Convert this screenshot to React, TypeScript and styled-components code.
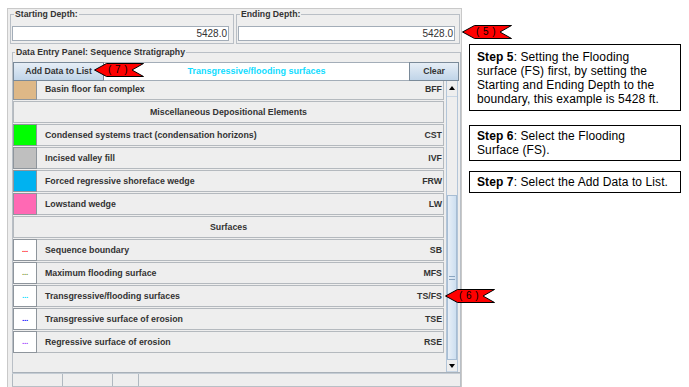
import styled, { createGlobalStyle } from "styled-components";

const GlobalStyle = createGlobalStyle`
  html, body {
    margin: 0;
    padding: 0;
    background: #ffffff;
    overflow: hidden;
  }
  body {
    font-family: "Liberation Sans", Arial, sans-serif;
  }
`;

const Page = styled.div`
  position: relative;
  display: flex;
  align-items: flex-start;
  width: 689px;
  height: 387px;
  overflow: hidden;
`;

const Frame = styled.div`
  box-sizing: border-box;
  width: 455px;
  height: 379px;
  margin: 8px 0 0 7px;
  background: #eeeeee;
  border: 1px solid #c9c9c9;
  border-bottom: none;
  overflow: hidden;
  display: flex;
  flex-direction: column;
`;

const DepthRow = styled.div`
  display: grid;
  grid-template-columns: 1fr 1fr;
  gap: 2px;
  padding: 0 1px 0 2px;
`;

const Group = styled.fieldset`
  margin: 0;
  padding: 7px 4px 2px 1px;
  border: 1px solid #b9bfc6;
  min-width: 0;
`;

const Legend = styled.legend`
  margin-left: 2px;
  padding: 0 1px;
  font: bold 8.7px/10px "Liberation Sans", Arial, sans-serif;
  color: #333333;
`;

const DepthField = styled.div`
  box-sizing: border-box;
  height: 15px;
  padding-right: 1px;
  background: #ffffff;
  border: 1px solid #a3adb8;
  font: 10px/13px "Liberation Sans", Arial, sans-serif;
  color: #333333;
  text-align: right;
`;

const DataPanel = styled.fieldset`
  flex: 1;
  min-height: 0;
  display: flex;
  flex-direction: column;
  margin: 3px 0 0 4px;
  padding: 5px 0 0 0;
  border: 1px solid #b9bfc6;
  min-width: 0;
`;

const ButtonRow = styled.div`
  display: flex;
  height: 19px;
  margin-right: 1px;
`;

const ActionButton = styled.div<{ $w: number }>`
  box-sizing: border-box;
  width: ${(p) => p.$w}px;
  display: flex;
  align-items: center;
  justify-content: center;
  border: 1px solid #7a8a99;
  background: linear-gradient(#e6eef6, #c0d4e8);
  font: bold 8.7px "Liberation Sans", Arial, sans-serif;
  color: #333333;
`;

const SelectionField = styled.div`
  flex: 1;
  display: flex;
  align-items: center;
  justify-content: center;
  background: #ffffff;
  border-top: 1px solid #a3adb8;
  border-bottom: 1px solid #a3adb8;
  font: bold 9px "Liberation Sans", Arial, sans-serif;
  color: #10dcff;
`;

const ListPane = styled.div`
  box-sizing: border-box;
  height: 296px;
  display: flex;
  border-bottom: 1px solid #a8b0b8;
`;

const Viewport = styled.div`
  flex: 1;
  overflow: hidden;
  padding-right: 2px;
`;

const Rows = styled.div`
  display: flex;
  flex-direction: column;
  gap: 1px;
  margin-top: -3px;
`;

const Row = styled.div`
  display: flex;
  height: 22px;
  flex-shrink: 0;
`;

const Swatch = styled.div<{ $fill: string }>`
  box-sizing: border-box;
  width: 24px;
  display: flex;
  align-items: center;
  justify-content: center;
  background: ${(p) => p.$fill};
  border: 1px solid #8e959c;
`;

const Dots = styled.span<{ $color: string }>`
  font: bold 8px/8px "Liberation Sans", Arial, sans-serif;
  color: ${(p) => p.$color};
  letter-spacing: -0.3px;
`;

const Cell = styled.div`
  box-sizing: border-box;
  flex: 1;
  display: flex;
  align-items: center;
  justify-content: space-between;
  padding: 0 1px 0 8px;
  border: 1px solid #b4b9be;
  border-left: none;
  background: #eeeeee;
  font: bold 8.8px "Liberation Sans", Arial, sans-serif;
  color: #333333;
`;

const HeaderRow = styled.div`
  box-sizing: border-box;
  height: 22px;
  flex-shrink: 0;
  display: flex;
  align-items: center;
  justify-content: center;
  border: 1px solid #b4b9be;
  background: #eeeeee;
  font: bold 8.8px "Liberation Sans", Arial, sans-serif;
  color: #333333;
`;

const ScrollBar = styled.div`
  box-sizing: border-box;
  width: 12px;
  margin-right: 2px;
  display: flex;
  flex-direction: column;
  border-left: 1px solid #b3c5d8;
  border-right: 1px solid #b3c5d8;
  background: #eeeeee;
`;

const ScrollButton = styled.div<{ $h: number }>`
  height: ${(p) => p.$h}px;
  display: flex;
  align-items: center;
  justify-content: center;
  border-bottom: 1px solid #c8d6e4;
`;

const Track = styled.div`
  flex: 1;
`;

const Thumb = styled.div`
  box-sizing: border-box;
  height: 165px;
  display: flex;
  align-items: center;
  justify-content: center;
  background: linear-gradient(to right, #e8eff7, #cddff0);
  border: 1px solid #a7bdd3;
`;

const Grip = styled.div`
  width: 6px;
  height: 2px;
  border-top: 1px solid #8aa5c0;
  border-bottom: 1px solid #8aa5c0;
`;

const BottomBar = styled.div`
  display: flex;
  height: 12px;
  margin-left: -1px;
  border-top: 1px solid #c4ccd4;
`;

const BottomCell = styled.div<{ $w?: number }>`
  ${(p) => (p.$w ? `width: ${p.$w}px;` : "flex: 1;")}
  border-left: 1px solid #b0b8c0;
`;

const Steps = styled.div`
  display: flex;
  flex-direction: column;
  width: 212px;
  margin: 44px 0 0 7px;
`;

const StepBox = styled.div<{ $pad: number; $space: number }>`
  box-sizing: border-box;
  margin-top: ${(p) => p.$space}px;
  padding: ${(p) => p.$pad}px 4px ${(p) => p.$pad}px 7px;
  border: 1px solid #000000;
  font: 12px/14px "Liberation Sans", Arial, sans-serif;
  letter-spacing: 0.1px;
  color: #000000;
  white-space: nowrap;
`;

const Callout = styled.div<{ $x: number; $y: number }>`
  position: absolute;
  left: ${(p) => p.$x}px;
  top: ${(p) => p.$y}px;
  width: 50px;
  height: 14px;
`;

const CalloutShape = styled.svg`
  position: absolute;
  inset: 0;
`;

const CalloutText = styled.span`
  position: absolute;
  left: 13px;
  top: 0;
  width: 22px;
  text-align: center;
  font: 10px/14px "Liberation Sans", Arial, sans-serif;
  letter-spacing: 0.4px;
  color: #000000;
  white-space: pre;
`;

type Entry =
  | { kind: "item"; label: string; code: string; fill: string; dot?: string }
  | { kind: "header"; label: string };

const entries: Entry[] = [
  { kind: "item", label: "Basin floor fan complex", code: "BFF", fill: "#deb887" },
  { kind: "header", label: "Miscellaneous Depositional Elements" },
  { kind: "item", label: "Condensed systems tract (condensation horizons)", code: "CST", fill: "#00ff00" },
  { kind: "item", label: "Incised valley fill", code: "IVF", fill: "#bfbfbf" },
  { kind: "item", label: "Forced regressive shoreface wedge", code: "FRW", fill: "#00b2f0" },
  { kind: "item", label: "Lowstand wedge", code: "LW", fill: "#ff69b4" },
  { kind: "header", label: "Surfaces" },
  { kind: "item", label: "Sequence boundary", code: "SB", fill: "#ffffff", dot: "#ff0000" },
  { kind: "item", label: "Maximum flooding surface", code: "MFS", fill: "#ffffff", dot: "#80a040" },
  { kind: "item", label: "Transgressive/flooding surfaces", code: "TS/FS", fill: "#ffffff", dot: "#00e0ff" },
  { kind: "item", label: "Transgressive surface of erosion", code: "TSE", fill: "#ffffff", dot: "#0000ff" },
  { kind: "item", label: "Regressive surface of erosion", code: "RSE", fill: "#ffffff", dot: "#9933ff" },
];

function Arrow({ x, y, n }: { x: number; y: number; n: number }) {
  return (
    <Callout $x={x} $y={y}>
      <CalloutShape width="50" height="14" viewBox="0 0 50 14">
        <polygon
          points="0.5,7 12.5,0.5 49.5,0.5 38,7 49.5,13.5 12.5,13.5"
          fill="#ff0000"
          stroke="#000000"
          strokeWidth="1"
        />
      </CalloutShape>
      <CalloutText>{`( ${n} )`}</CalloutText>
    </Callout>
  );
}

function Triangle({ up }: { up: boolean }) {
  return (
    <svg width="6" height="4" viewBox="0 0 6 4">
      <polygon points={up ? "0,4 6,4 3,0" : "0,0 6,0 3,4"} fill="#000000" />
    </svg>
  );
}

export default function App() {
  return (
    <>
      <GlobalStyle />
      <Page>
        <Frame>
          <DepthRow>
            <Group>
              <Legend>Starting Depth:</Legend>
              <DepthField>5428.0</DepthField>
            </Group>
            <Group>
              <Legend>Ending Depth:</Legend>
              <DepthField>5428.0</DepthField>
            </Group>
          </DepthRow>
          <DataPanel>
            <Legend>Data Entry Panel: Sequence Stratigraphy</Legend>
            <ButtonRow>
              <ActionButton $w={91}>Add Data to List</ActionButton>
              <SelectionField>Transgressive/flooding surfaces</SelectionField>
              <ActionButton $w={50}>Clear</ActionButton>
            </ButtonRow>
            <ListPane>
              <Viewport>
                <Rows>
                  {entries.map((e) =>
                    e.kind === "header" ? (
                      <HeaderRow key={e.label}>{e.label}</HeaderRow>
                    ) : (
                      <Row key={e.code}>
                        <Swatch $fill={e.fill}>
                          {e.dot && <Dots $color={e.dot}>...</Dots>}
                        </Swatch>
                        <Cell>
                          <span>{e.label}</span>
                          <span>{e.code}</span>
                        </Cell>
                      </Row>
                    )
                  )}
                </Rows>
              </Viewport>
              <ScrollBar>
                <ScrollButton $h={15}>
                  <Triangle up />
                </ScrollButton>
                <Track />
                <Thumb>
                  <Grip />
                </Thumb>
                <ScrollButton $h={11}>
                  <Triangle up={false} />
                </ScrollButton>
              </ScrollBar>
            </ListPane>
            <BottomBar>
              <BottomCell $w={49} />
              <BottomCell $w={49} />
              <BottomCell $w={25} />
              <BottomCell />
            </BottomBar>
          </DataPanel>
        </Frame>
        <Steps>
          <StepBox $pad={4.5} $space={0}>
            <b>Step 5</b>: Setting the Flooding
            <br />
            surface (FS) first, by setting the
            <br />
            Starting and Ending Depth to the
            <br />
            boundary, this example is 5428 ft.
          </StepBox>
          <StepBox $pad={3} $space={14}>
            <b>Step 6</b>: Select the Flooding
            <br />
            Surface (FS).
          </StepBox>
          <StepBox $pad={3} $space={10}>
            <b>Step 7</b>: Select the Add Data to List.
          </StepBox>
        </Steps>
        <Arrow x={462} y={25} n={5} />
        <Arrow x={94} y={63} n={7} />
        <Arrow x={445} y={289} n={6} />
      </Page>
    </>
  );
}
